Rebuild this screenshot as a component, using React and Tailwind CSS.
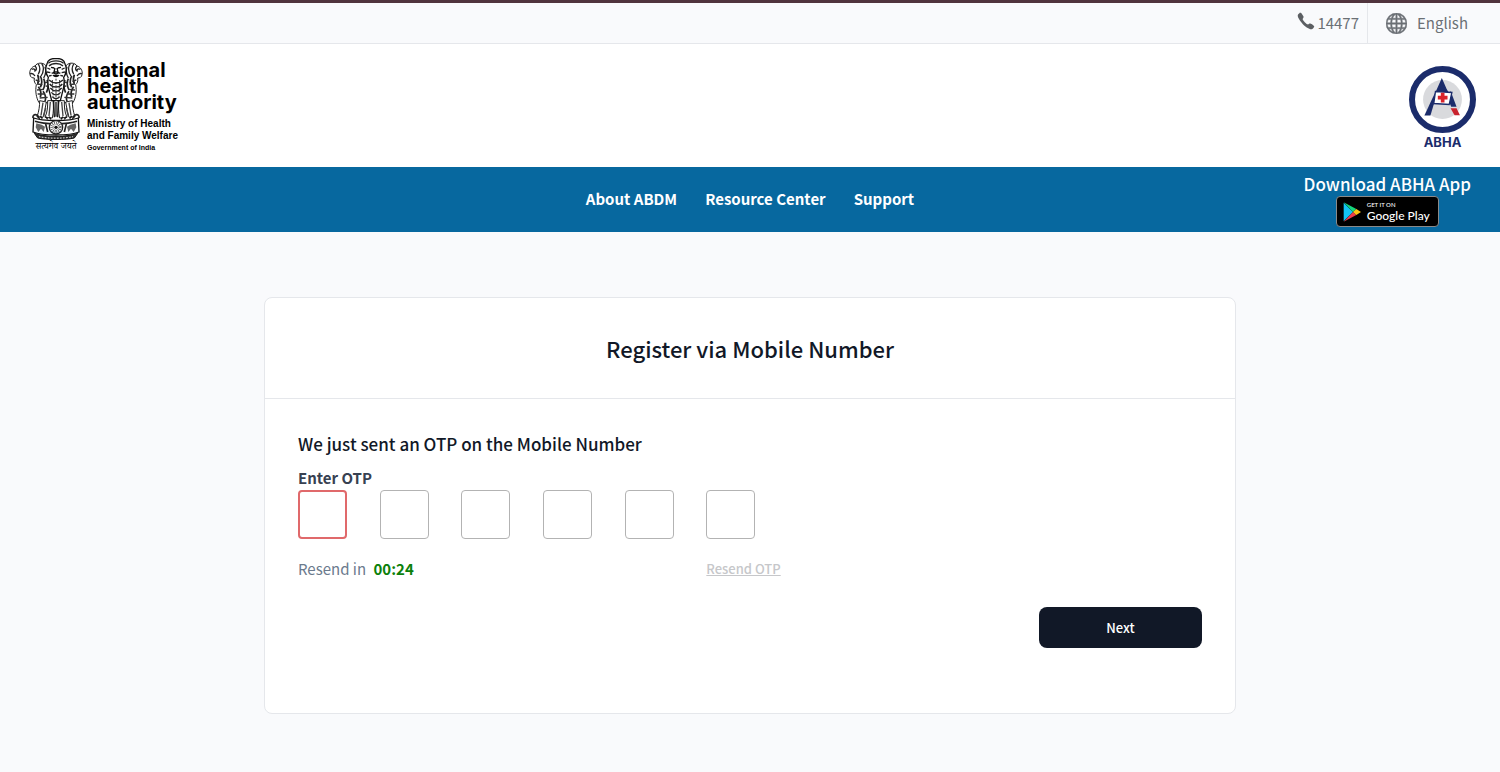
import React, { useState } from 'react';
import { BsGlobe } from 'react-icons/bs';
import { IoIosCall } from 'react-icons/io';

// One side of the emblem, the other one is mirrored
const SideLion = () => (
    <g>
        <path
            d="M50 22 C40 12 24 14 18 24 C8 26 0 38 3 50 C4 58 10 60 16 60 C14 70 18 76 22 80 C18 100 22 120 30 134 L70 134 L66 60 Z"
            fill="#fff" stroke="#222" strokeWidth="3"
        />
        <path d="M18 24 C24 30 24 36 16 40 M3 48 C10 44 14 48 18 54 M8 34 C12 32 16 33 18 36 M28 18 C34 28 34 38 28 48 M38 16 C46 28 44 42 36 54 M48 26 C52 38 50 50 44 60" fill="none" stroke="#222" strokeWidth="4" />
        <path d="M26 50 C30 60 30 68 26 78 M34 54 C40 66 40 76 34 88 M44 62 C50 74 48 84 42 96 M54 66 C60 80 58 92 52 104 M28 86 C36 96 38 104 34 118 M42 100 C50 110 52 118 48 130" fill="none" stroke="#222" strokeWidth="5" />
        <path d="M20 66 L32 70 M24 78 L40 80 M24 96 L44 94 M26 108 L48 108 M32 120 L56 118 M50 84 L64 86 M48 74 L62 72" stroke="#333" strokeWidth="4" />
        <path d="M32 128 C32 144 30 160 24 176 L42 178 C46 162 50 148 52 132 Z" fill="#fff" stroke="#222" strokeWidth="3" />
        <path d="M56 128 C56 146 56 160 48 178 L70 180 C74 160 74 146 72 128 Z" fill="#fff" stroke="#222" strokeWidth="3" />
        <path d="M42 134 L36 172 M64 132 L60 174 M50 150 L44 176" stroke="#444" strokeWidth="4" />
        <path d="M24 174 L32 182 M34 174 L40 182 M50 176 L56 184 M60 176 L66 184" stroke="#111" strokeWidth="4" />
    </g>
);

const Emblem = () => (
    <svg viewBox="0 0 162 246" className="h-[82px] w-[54px]" aria-hidden="true">
        <SideLion />
        <g transform="translate(162 0) scale(-1 1)">
            <SideLion />
        </g>
        {/* middle lion */}
        <path d="M81 2 C66 0 54 8 54 18 C48 30 50 48 58 58 C54 74 58 90 62 104 L68 128 L94 128 L100 104 C104 90 108 74 104 58 C112 48 114 30 108 18 C108 8 96 0 81 2 Z" fill="#fff" stroke="#111" strokeWidth="4" />
        <path d="M58 16 C68 6 94 6 104 16 M60 24 C70 14 92 14 102 24 M55 30 L64 34 M107 30 L98 34 M54 42 L64 44 M108 42 L98 44 M60 54 L68 52 M102 54 L94 52" fill="none" stroke="#222" strokeWidth="4" />
        <path d="M66 28 L76 30 M96 28 L86 30 M78 30 L75 42 L87 42 L84 30 M68 46 C74 42 78 48 81 48 C84 48 88 42 94 46" fill="none" stroke="#111" strokeWidth="4" />
        <path d="M70 52 C76 60 86 60 92 52 L88 50 L74 50 Z" fill="#111" />
        <path d="M60 66 C72 78 90 78 102 66 M62 78 C72 90 90 90 100 78 M64 90 C74 102 88 102 98 90 M67 103 C76 113 86 113 95 103 M70 116 C76 124 86 124 92 116" fill="none" stroke="#222" strokeWidth="4" />
        <path d="M70 66 L73 120 M81 62 L81 128 M92 66 L89 120" stroke="#333" strokeWidth="3" strokeDasharray="6 4" />
        <path d="M74 128 L76 178 M88 128 L86 178 M81 132 L81 176" stroke="#111" strokeWidth="4" />
        {/* abacus */}
        <path d="M14 180 C40 190 122 190 148 180 L150 222 C122 234 40 234 12 222 Z" fill="#fff" stroke="#111" strokeWidth="4" />
        <path d="M12 180 C10 168 24 166 30 178 M150 180 C152 168 138 166 132 178 M18 190 C46 200 116 200 144 190" fill="none" stroke="#222" strokeWidth="5" />
        <path d="M22 196 L38 200 L48 206 L44 222 L36 212 L28 222 L20 208 Z M140 196 L124 200 L114 206 L118 222 L126 212 L134 222 L142 208 Z" fill="#666" />
        <path d="M50 198 L56 222 M112 198 L106 222" stroke="#222" strokeWidth="5" />
        <circle cx="81" cy="208" r="20" fill="#fff" stroke="#222" strokeWidth="4" />
        <circle cx="81" cy="208" r="12" fill="none" stroke="#444" strokeWidth="10" strokeDasharray="2 3" />
        <circle cx="81" cy="208" r="5" fill="#111" />
        <path d="M16 226 C46 238 116 238 146 226 L136 240 C112 246 50 246 26 240 Z" fill="#333" stroke="#111" strokeWidth="3" />
        <path d="M30 236 C56 242 106 242 132 236" fill="none" stroke="#ddd" strokeWidth="3" strokeDasharray="5 4" />
    </svg>
);

const AbhaLogo = () => (
    <svg viewBox="0 0 200 200" className="size-[67px]" aria-hidden="true">
        <circle cx="100" cy="100" r="91" fill="#fff" stroke="#1b2c6b" strokeWidth="18" />
        <circle cx="100" cy="100" r="58" fill="#d9dadd" />
        <path d="M98 36 L112 68 L118 78 L80 76 Z" fill="#1b2c6b" />
        <path d="M80 76 L74 114 L64 148 H46 L72 92 Z" fill="#1b2c6b" />
        <path d="M124 74 L142 122 L126 122 L118 104 Z" fill="#1b2c6b" />
        <path d="M79 76 L128 79 L120 115 L74 112 Z" fill="#fff" stroke="#1b2c6b" strokeWidth="4" />
        <path d="M95 80 H106 V89 H115 V100 H106 V109 H95 V100 H86 V89 H95 Z" fill="#d9242b" />
        <path d="M124 126 H142 L152 147 H136 Z" fill="#c9232d" />
    </svg>
);

const PlayMark = () => (
    <svg viewBox="0 0 54 60" className="h-5 w-[18px]" aria-hidden="true">
        <path d="M2 2 L30 30 L2 58 Z" fill="#12c4f4" />
        <path d="M2 1 L40 21 L30 30 Z" fill="#15d67c" />
        <path d="M2 59 L40 39 L30 30 Z" fill="#ee3a4c" />
        <path d="M40 21 L54 30 L40 39 L30 30 Z" fill="#fbc412" />
    </svg>
);

const navLinks = ['About ABDM', 'Resource Center', 'Support'];

const App = () => {
    const [otp, setOtp] = useState(['', '', '', '', '', '']);

    const handleChange = (index, value) => {
        setOtp(otp.map((digit, i) => (i === index ? value.replace(/\D/g, '') : digit)));
    };

    return (
        <div className="min-h-screen bg-[#f9fafc] font-['Noto_Sans_CJK_SC',sans-serif] text-[#111827]">
            <div className="flex h-11 justify-end border-t-3 border-b border-t-[#50343d] border-b-gray-200 text-[15px] text-[#6b7075]">
                <a href="tel:14477" className="flex items-center border-r border-gray-200 pr-2">
                    <IoIosCall className="mb-1 size-[22px] text-[#5c5f63]" />
                    14477
                </a>
                <button type="button" className="flex items-center gap-2.5 pr-8 pl-[18px]">
                    <BsGlobe className="size-[21px]" strokeWidth={0.4} />
                    English
                </button>
            </div>

            <header className="flex h-[123px] items-center justify-between bg-white pr-6 pl-7">
                <a href="#nha" className="flex items-start gap-1 pl-px text-black">
                    <span className="flex flex-col items-center gap-0.5">
                        <Emblem />
                        <span className="font-['Noto_Serif_Devanagari','Noto_Sans_Devanagari',serif] text-[9px] leading-3">सत्यमेव जयते</span>
                    </span>
                    <span className="flex flex-col pt-0.5 font-['Liberation_Sans',sans-serif] font-bold">
                        <span className="flex flex-col pt-0.5 pb-1 font-['Inter',sans-serif] text-[20px] leading-4">
                            <span>national</span>
                            <span>health</span>
                            <span>authority</span>
                        </span>
                        <span className="pt-1 text-[10px] leading-3">Ministry of Health</span>
                        <span className="text-[10px] leading-3">and Family Welfare</span>
                        <span className="text-[7px] leading-3">Government of India</span>
                    </span>
                </a>
                <a href="#abha" className="flex flex-col items-center gap-px pt-1 text-[#1b2c6b]">
                    <AbhaLogo />
                    <span className="font-['Inter',sans-serif] text-[13px] leading-4 font-bold">ABHA</span>
                </a>
            </header>

            <nav className="grid h-[65px] grid-cols-[1fr_auto_1fr] items-center bg-[#07689f] text-white">
                <ul className="col-start-2 flex gap-7 text-[15px] font-bold">
                    {navLinks.map((link) => (
                        <li key={link}>
                            <a href="#menu">{link}</a>
                        </li>
                    ))}
                </ul>
                <div className="flex flex-col items-center justify-self-end pr-[29px]">
                    <span className="text-[17px] leading-6 font-medium">Download ABHA App</span>
                    <a href="#play" className="flex h-[31px] w-[103px] items-center gap-1.5 rounded border border-[#8a8a8a] bg-black pl-1.5 font-['Lato',sans-serif] font-medium">
                        <PlayMark />
                        <span className="flex flex-col">
                            <span className="text-[6px] leading-2">GET IT ON</span>
                            <span className="text-[12px] leading-3.5 whitespace-nowrap">Google Play</span>
                        </span>
                    </a>
                </div>
            </nav>

            <main className="px-8 py-[65px]">
                <form className="mx-auto max-w-[972px] rounded-lg border border-gray-200 bg-white" onSubmit={(e) => e.preventDefault()}>
                    <h1 className="border-b border-gray-200 py-8 text-center text-[22px] leading-9 font-medium">Register via Mobile Number</h1>
                    <div className="px-[33px] pt-[31px] pb-[65px]">
                        <h2 className="text-[17px] leading-7 font-medium">We just sent an OTP on the Mobile Number</h2>
                        <fieldset className="pt-1">
                            <legend className="float-left w-full pt-1 text-[15px] leading-6 font-bold text-[#374151]">Enter OTP</legend>
                            <div className="clear-both grid w-[490px] grid-cols-6">
                                {otp.map((digit, index) => (
                                    <input
                                        key={index}
                                        type="text"
                                        inputMode="numeric"
                                        maxLength={1}
                                        aria-label={`OTP digit ${index + 1}`}
                                        value={digit}
                                        onChange={(e) => handleChange(index, e.target.value)}
                                        className={`size-[49px] rounded text-center outline-none ${index === 0 ? 'border-2 border-[#e0696b]' : 'border border-[#b3b3b3]'}`}
                                    />
                                ))}
                            </div>
                        </fieldset>
                        <div className="grid w-[490px] grid-cols-6 items-center pt-4">
                            <p className="col-span-5 text-[15px] leading-7 text-[#6b7a8d]">
                                Resend in <span className="pl-1 font-bold text-[#0b800b]">00:24</span>
                            </p>
                            <button type="button" disabled className="text-left text-[13px] leading-7 font-medium whitespace-nowrap text-[#c6c7ca] underline">Resend OTP</button>
                        </div>
                        <div className="flex justify-end pt-6">
                            <button type="submit" className="h-[41px] w-[163px] rounded-lg bg-[#111827] text-[13px] font-medium text-white">Next</button>
                        </div>
                    </div>
                </form>
            </main>
        </div>
    );
};

export default App;
